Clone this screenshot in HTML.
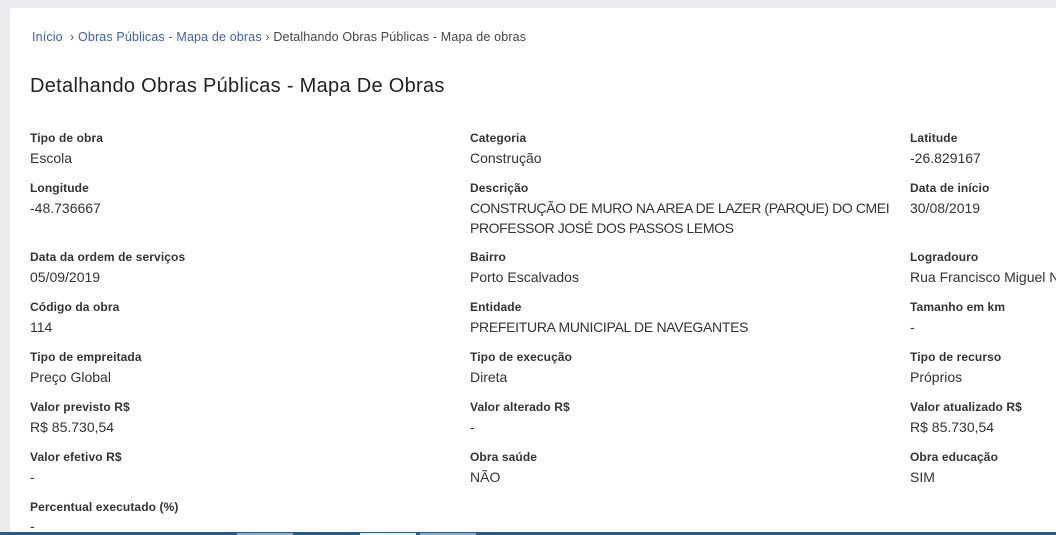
<!DOCTYPE html>
<html><head><meta charset="utf-8"><style>
body{margin:0;width:1056px;height:535px;overflow:hidden;background:#ebecf0;font-family:"Liberation Sans",sans-serif;position:relative}
.card{position:absolute;left:10px;top:8px;width:1046px;height:524px;background:#fff}
.t{position:absolute;white-space:nowrap;color:#222}
.l{font-size:12px;font-weight:bold;color:#333;letter-spacing:0.1px}
.v{font-size:14px;color:#333;letter-spacing:0px}
.bar{position:absolute;left:0;top:532px;width:1056px;height:3px;background:#2b5a86}
</style></head><body>
<div class="card"></div>
<div class="t" style="left:32px;top:30px;font-size:12.5px;color:#4060b0;letter-spacing:0.15px">Início <span style="color:#555">&nbsp;›&nbsp;</span>Obras Públicas - Mapa de obras <span style="color:#555">›</span> <span style="color:#444">Detalhando Obras Públicas - Mapa de obras</span></div>
<div class="t" style="left:30px;top:75px;font-size:20px;color:#222;letter-spacing:0.3px">Detalhando Obras Públicas - Mapa De Obras</div>

<div class="t l" style="left:30px;top:131px">Tipo de obra</div><div class="t v" style="left:30px;top:150px">Escola</div>
<div class="t l" style="left:470px;top:131px">Categoria</div><div class="t v" style="left:470px;top:150px">Construção</div>
<div class="t l" style="left:910px;top:131px">Latitude</div><div class="t v" style="left:910px;top:150px">-26.829167</div>

<div class="t l" style="left:30px;top:181px">Longitude</div><div class="t v" style="left:30px;top:200px">-48.736667</div>
<div class="t l" style="left:470px;top:181px">Descrição</div><div class="t v" style="left:470px;top:198px;line-height:20px;letter-spacing:-0.4px">CONSTRUÇÃO DE MURO NA AREA DE LAZER (PARQUE) DO CMEI<br>PROFESSOR JOSÉ DOS PASSOS LEMOS</div>
<div class="t l" style="left:910px;top:181px">Data de início</div><div class="t v" style="left:910px;top:200px">30/08/2019</div>

<div class="t l" style="left:30px;top:250px">Data da ordem de serviços</div><div class="t v" style="left:30px;top:269px">05/09/2019</div>
<div class="t l" style="left:470px;top:250px">Bairro</div><div class="t v" style="left:470px;top:269px">Porto Escalvados</div>
<div class="t l" style="left:910px;top:250px">Logradouro</div><div class="t v" style="left:910px;top:269px">Rua Francisco Miguel N</div>

<div class="t l" style="left:30px;top:300px">Código da obra</div><div class="t v" style="left:30px;top:319px">114</div>
<div class="t l" style="left:470px;top:300px">Entidade</div><div class="t v" style="left:470px;top:319px;letter-spacing:-0.3px">PREFEITURA MUNICIPAL DE NAVEGANTES</div>
<div class="t l" style="left:910px;top:300px">Tamanho em km</div><div class="t v" style="left:910px;top:319px">-</div>

<div class="t l" style="left:30px;top:350px">Tipo de empreitada</div><div class="t v" style="left:30px;top:369px">Preço Global</div>
<div class="t l" style="left:470px;top:350px">Tipo de execução</div><div class="t v" style="left:470px;top:369px">Direta</div>
<div class="t l" style="left:910px;top:350px">Tipo de recurso</div><div class="t v" style="left:910px;top:369px">Próprios</div>

<div class="t l" style="left:30px;top:400px">Valor previsto R$</div><div class="t v" style="left:30px;top:419px">R$ 85.730,54</div>
<div class="t l" style="left:470px;top:400px">Valor alterado R$</div><div class="t v" style="left:470px;top:419px">-</div>
<div class="t l" style="left:910px;top:400px">Valor atualizado R$</div><div class="t v" style="left:910px;top:419px">R$ 85.730,54</div>

<div class="t l" style="left:30px;top:450px">Valor efetivo R$</div><div class="t v" style="left:30px;top:469px">-</div>
<div class="t l" style="left:470px;top:450px">Obra saúde</div><div class="t v" style="left:470px;top:469px">NÃO</div>
<div class="t l" style="left:910px;top:450px">Obra educação</div><div class="t v" style="left:910px;top:469px">SIM</div>

<div class="t l" style="left:30px;top:500px">Percentual executado (%)</div><div class="t v" style="left:30px;top:518px">-</div>

<div class="bar"></div>
<div style="position:absolute;left:237px;top:533px;width:56px;height:2px;background:#9ab"></div>
<div style="position:absolute;left:360px;top:533px;width:56px;height:2px;background:#eee"></div>
<div style="position:absolute;left:420px;top:533px;width:56px;height:2px;background:#9ab"></div>
</body></html>
